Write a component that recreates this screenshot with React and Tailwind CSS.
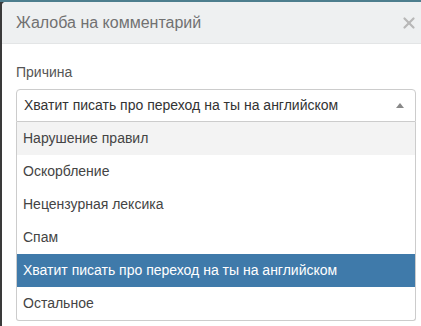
import { X } from 'lucide-react'

const OPTIONS = [
  { label: 'Нарушение правил', hover: true },
  { label: 'Оскорбление' },
  { label: 'Нецензурная лексика' },
  { label: 'Спам' },
  { label: 'Хватит писать про переход на ты на английском', selected: true },
  { label: 'Остальное' },
]

export default function App() {
  return (
    <div className="w-[421px] h-[326px] overflow-hidden bg-[#3a3a3a] pt-[2px] font-['Liberation_Sans',Arial,sans-serif]">
      <div className="h-[2px] -mt-[2px] bg-[#4d7e8e]" />
      <div className="ml-[2px] h-[340px] bg-white rounded-tl-[4px] overflow-hidden">
        {/* Header */}
        <div className="h-[42px] bg-[#eef0f1] border-b border-[#e3e5e6] flex items-center justify-between pl-[14px] pr-[3px]">
          <h3 className="text-[16px] text-[#717171] leading-none pt-[1px]">Жалоба на комментарий</h3>
          <X size={18} strokeWidth={3} className="text-[#b8b8b8]" />
        </div>

        {/* Body */}
        <div className="pt-[21px] pl-[14px] pr-[5px]">
          <p className="text-[14px] text-[#555] leading-none mb-[10px]">Причина</p>
          <div className="border border-[#cccccc] rounded-t-[4px] h-[33px] flex items-center justify-between pl-[7px] pr-[11px]">
            <span className="text-[14px] text-[#333]">Хватит писать про переход на ты на английском</span>
            <span className="w-0 h-0 border-l-[4px] border-r-[4px] border-b-[5px] border-l-transparent border-r-transparent border-b-[#888]" />
          </div>
          <ul className="border border-t-0 border-[#cccccc] rounded-b-[3px] bg-white">
            {OPTIONS.map(o => (
              <li
                key={o.label}
                className={`h-[33px] flex items-center pl-[6px] text-[14px] ${
                  o.selected ? 'bg-[#3f7aaa] text-white' : o.hover ? 'bg-[#f3f3f3] text-[#444]' : 'text-[#444]'
                }`}
              >
                {o.label}
              </li>
            ))}
          </ul>
        </div>
      </div>
    </div>
  )
}
